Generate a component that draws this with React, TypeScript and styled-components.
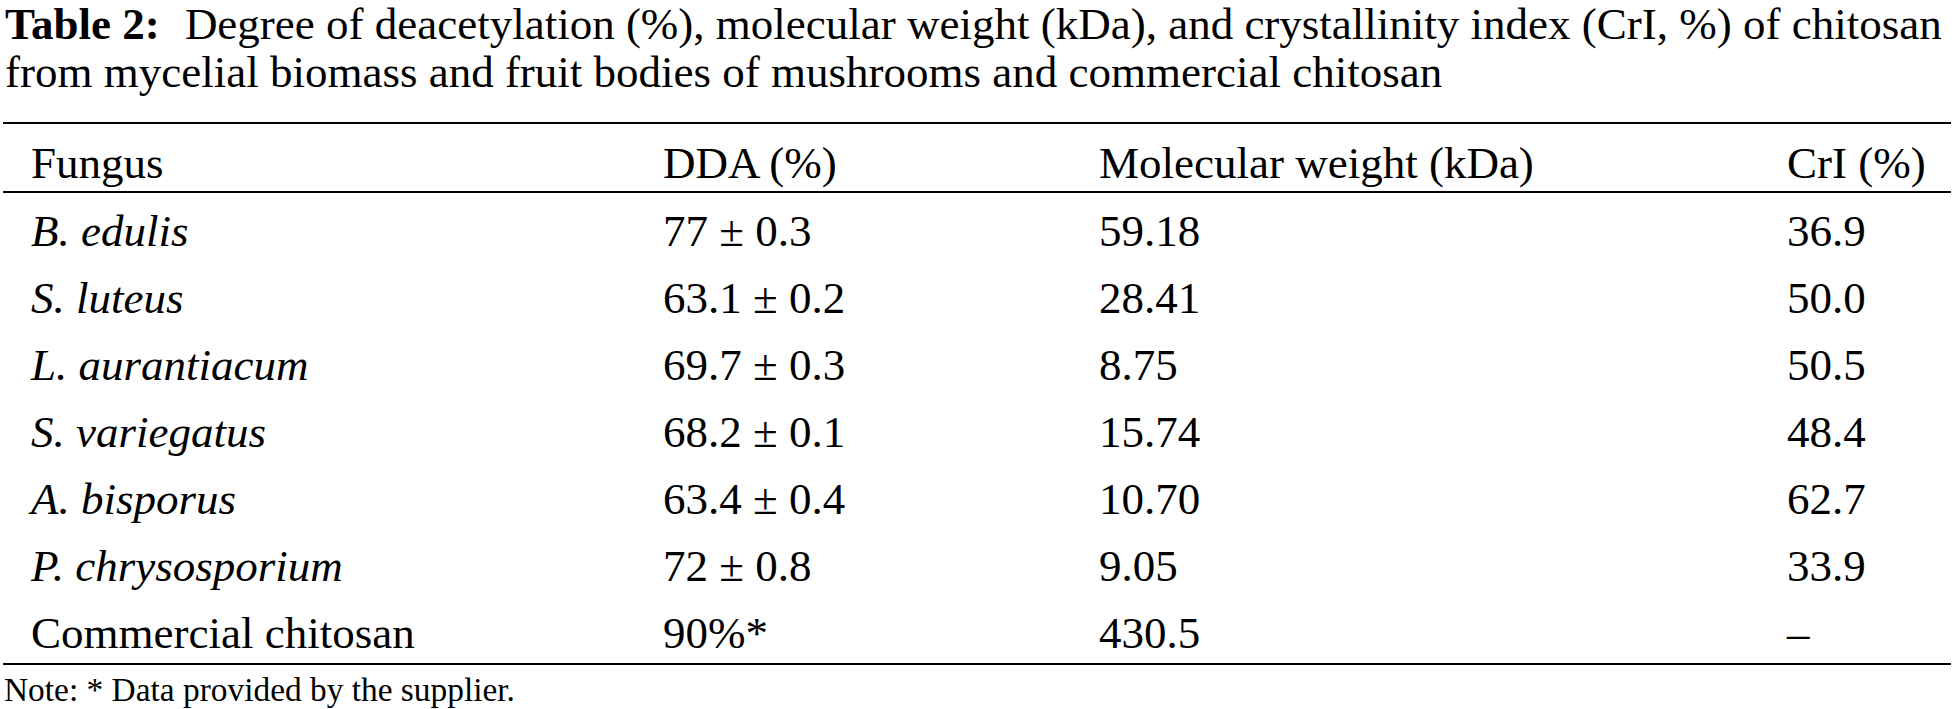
import React, { FC } from 'react';
import styled, { createGlobalStyle } from 'styled-components';

const GlobalStyle = createGlobalStyle`
  html, body {
    margin: 0;
    padding: 0;
    background: #ffffff;
  }
  body {
    font-family: 'Liberation Serif', 'Times New Roman', serif;
    color: #000000;
  }
`;

const Page = styled.div`
  width: 1957px;
  padding: 0 6px 0 3px;
  box-sizing: border-box;
`;

const Caption = styled.p`
  margin: 0 0 0 2px;
  font-size: 45px;
  line-height: 48px;
  white-space: nowrap;
`;

const CaptionLabel = styled.b`
  font-weight: 700;
  margin-right: 14px;
`;

const Table = styled.div`
  margin-top: 26px;
  border-top: 2px solid #000;
  border-bottom: 2px solid #000;
`;

const Row = styled.div<{ header?: boolean }>`
  display: grid;
  grid-template-columns: 632px 436px 688px 1fr;
  height: ${(p) => (p.header ? '69px' : '67px')};
  padding-top: ${(p) => (p.header ? '14px' : '0')};
  box-sizing: border-box;
  font-size: 45px;
  line-height: ${(p) => (p.header ? '50px' : '67px')};
  border-bottom: ${(p) => (p.header ? '2px solid #000' : 'none')};
  white-space: nowrap;
`;

const Body = styled.div`
  padding-top: 5px;
  margin-bottom: -4px;
`;

const Cell = styled.div<{ italic?: boolean }>`
  padding-left: 28px;
  font-style: ${(p) => (p.italic ? 'italic' : 'normal')};
`;

const Note = styled.p`
  margin: 5px 0 0 1px;
  font-size: 33.4px;
  line-height: 40px;
`;

type RowData = {
  fungus: string;
  italic: boolean;
  dda: string;
  mw: string;
  cri: string;
};

const rows: RowData[] = [
  { fungus: 'B. edulis', italic: true, dda: '77 ± 0.3', mw: '59.18', cri: '36.9' },
  { fungus: 'S. luteus', italic: true, dda: '63.1 ± 0.2', mw: '28.41', cri: '50.0' },
  { fungus: 'L. aurantiacum', italic: true, dda: '69.7 ± 0.3', mw: '8.75', cri: '50.5' },
  { fungus: 'S. variegatus', italic: true, dda: '68.2 ± 0.1', mw: '15.74', cri: '48.4' },
  { fungus: 'A. bisporus', italic: true, dda: '63.4 ± 0.4', mw: '10.70', cri: '62.7' },
  { fungus: 'P. chrysosporium', italic: true, dda: '72 ± 0.8', mw: '9.05', cri: '33.9' },
  { fungus: 'Commercial chitosan', italic: false, dda: '90%*', mw: '430.5', cri: '–' },
];

const App: FC = () => {
  return (
    <Page>
      <GlobalStyle />
      <Caption>
        <CaptionLabel>Table 2:</CaptionLabel> Degree of deacetylation (%), molecular weight (kDa), and crystallinity
        index (CrI, %) of chitosan
        <br />
        from mycelial biomass and fruit bodies of mushrooms and commercial chitosan
      </Caption>
      <Table>
        <Row header>
          <Cell>Fungus</Cell>
          <Cell>DDA (%)</Cell>
          <Cell>Molecular weight (kDa)</Cell>
          <Cell>CrI (%)</Cell>
        </Row>
        <Body>
          {rows.map((r) => (
            <Row key={r.fungus}>
              <Cell italic={r.italic}>{r.fungus}</Cell>
              <Cell>{r.dda}</Cell>
              <Cell>{r.mw}</Cell>
              <Cell>{r.cri}</Cell>
            </Row>
          ))}
        </Body>
      </Table>
      <Note>Note: * Data provided by the supplier.</Note>
    </Page>
  );
};

export default App;
